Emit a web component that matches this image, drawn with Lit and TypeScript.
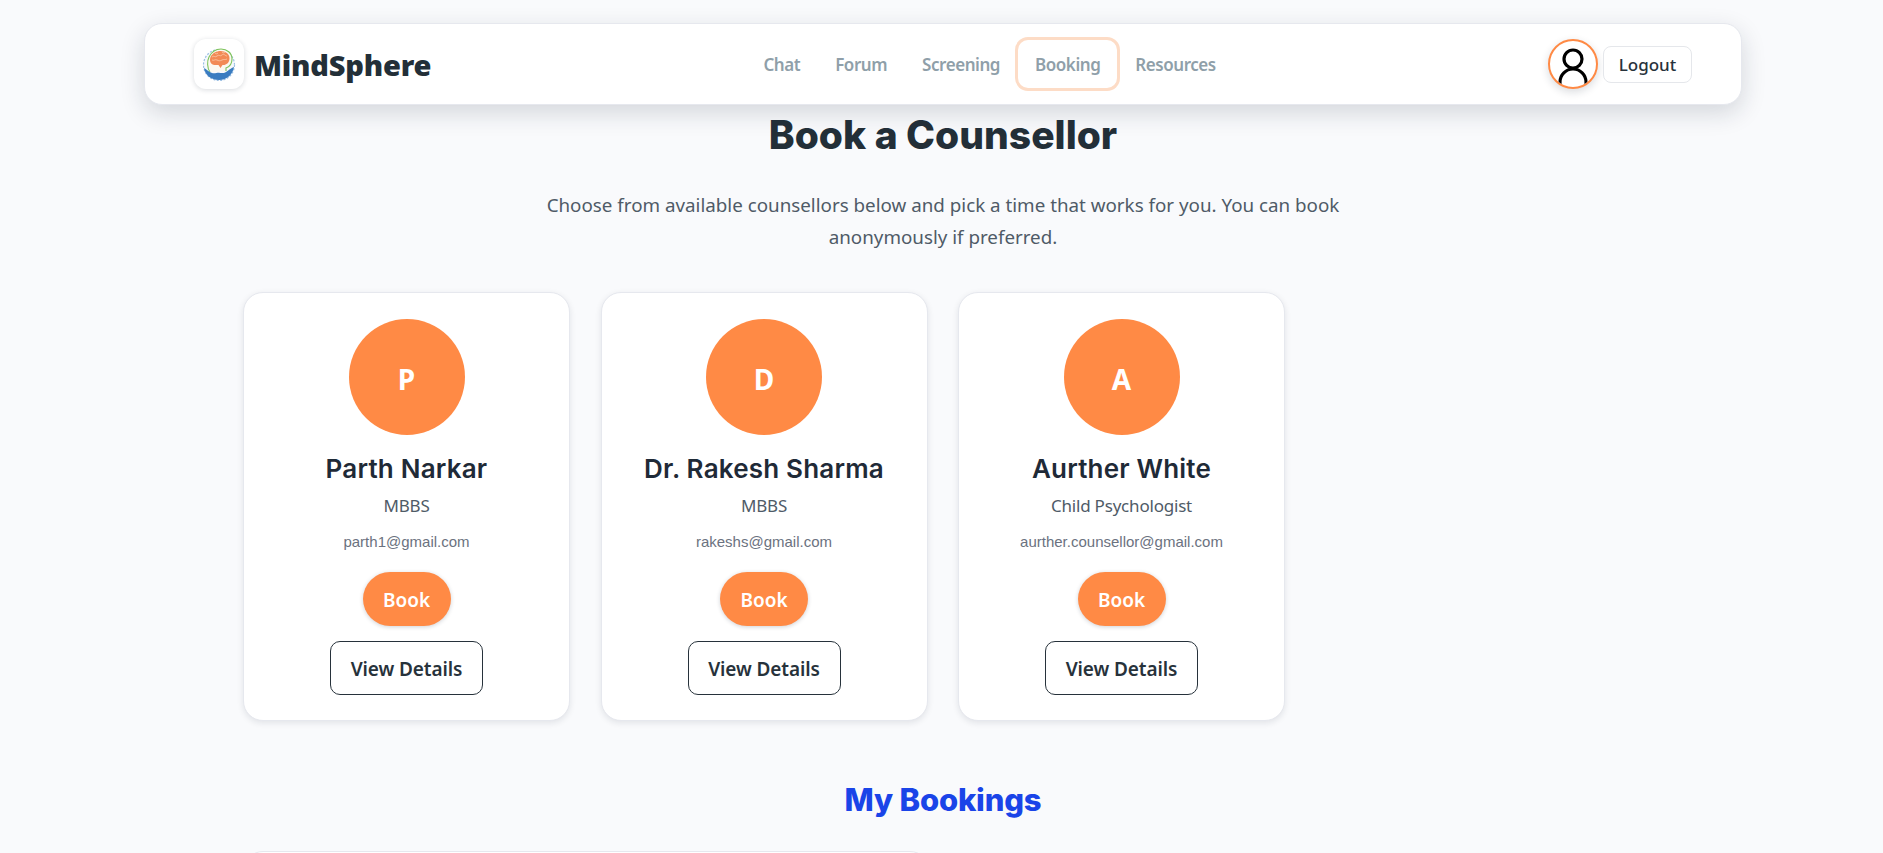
import { LitElement, html, css, svg } from "lit";
import { customElement } from "lit/decorators.js";

const counsellors = [
  { i: "P", name: "Parth Narkar", role: "MBBS", email: "parth1@gmail.com" },
  { i: "D", name: "Dr. Rakesh Sharma", role: "MBBS", email: "rakeshs@gmail.com" },
  { i: "A", name: "Aurther White", role: "Child Psychologist", email: "aurther.counsellor@gmail.com" },
];
const links = ["Chat", "Forum", "Screening", "Booking", "Resources"];

const logo = svg`<svg class="logo" viewBox="0 0 34 34" aria-hidden="true">
  <circle cx="17" cy="18" r="15.5" fill="#f6f9fc" stroke="#9cc0e4" stroke-width="1.2" stroke-dasharray="2 1.5"/>
  <path d="M8 25C5 21 5 14 7 10c3-6 8-8 12-8 6 0 11 4 11 10 0 5-3 8-6 9v3" fill="#fbf8f0" stroke="#7cc35a" stroke-width="1.1"/>
  <path d="M8.500 10c2-4 6-6 10-6 5 0 9 3 9 7 0 4-2 6-5 7h-2l-2 3-2-3h-4C9 18 7 14 8.500 10z" fill="#f28a55"/>
  <path d="M10 10c2-2 3 1 5-1s3 1 5-1 3 1 5 1M10 13c2 1 3-1 5 0s3 1 5 0 3 0 5-1M13 6c1 1 2 1 3 0M20 5c1 1 2 1 3 0" fill="none" stroke="#fbd2b8" stroke-width=".7"/>
  <path d="M2 21c2 1 5 4 8 5 3 1 6-1 8 0h4c3-1 5-4 10-6-1 7-7 13-15 13C9 33 3 28 2 21z" fill="#3a7cc0"/>
</svg>`;

@customElement("app-root")
export class AppRoot extends LitElement {
  static styles = css`
    :host { display: block; height: 853px; overflow: hidden; background: #f9fafc; font-family: "Noto Sans", "Open Sans", sans-serif; color: #1f2a37; }
    .page { width: 1886px; }
    .nav { width: 1598px; height: 82px; box-sizing: border-box; margin: 23px auto 0; padding: 0 49px; display: flex; align-items: center; justify-content: space-between; background: #fff; border: 1px solid #e6e8ee; border-radius: 18px; box-shadow: 0 8px 24px rgba(20, 30, 50, 0.16); position: relative; z-index: 2; }
    .brand { display: flex; align-items: center; gap: 10px; }
    .logo-box { width: 50px; height: 50px; border-radius: 12px; background: #fff; box-shadow: 0 1px 5px rgba(20, 30, 50, 0.16); display: flex; align-items: center; justify-content: center; }
    .logo { width: 34px; height: 34px; }
    .brand-name { font: 900 29px "Noto Sans", sans-serif; color: #232f38; letter-spacing: -0.2px; }
    .links { display: flex; gap: 1px; }
    .link { padding: 0 17px; height: 48px; display: flex; align-items: center; font-size: 17px; font-weight: 600; color: #8f9fa9; letter-spacing: -0.45px; border-radius: 10px; }
    .link.active { box-shadow: 0 0 0 3px #fddcc6; }
    .user { display: flex; align-items: center; gap: 5px; }
    .avatar { width: 50px; height: 50px; box-sizing: border-box; border-radius: 50%; border: 2px solid #ff8a45; box-shadow: 0 3px 8px rgba(20, 30, 50, 0.16); overflow: hidden; background: #fff; }
    .avatar svg { display: block; width: 46px; height: 46px; }
    .logout { width: 89px; height: 37px; box-sizing: border-box; border: 1px solid #e5e7eb; border-radius: 8px; display: flex; align-items: center; justify-content: center; font-size: 17px; font-weight: 500; color: #27323b; background: #fff; }
    h1 { margin: 0; padding-top: 8px; text-align: center; font: 800 39px/44px Inter, sans-serif; color: #232f38; letter-spacing: 0; }
    .sub { width: 860px; margin: 32px auto 0; text-align: center; font-size: 18.8px; line-height: 32px; color: #4f5b67; }
    .grid { width: 1400px; margin: 39px auto 0; display: grid; grid-template-columns: repeat(auto-fill, 327px); gap: 30.5px; }
    .card { box-sizing: border-box; height: 429px; padding: 26px 0 0; display: flex; flex-direction: column; align-items: center; background: #fff; border: 1px solid #e6e8ee; border-radius: 20px; box-shadow: 0 2px 6px rgba(20, 30, 50, 0.1); }
    .circle { width: 116px; height: 116px; box-sizing: border-box; padding-top: 3px; border-radius: 50%; background: #ff8a45; display: flex; align-items: center; justify-content: center; color: #fff; font-size: 28px; font-weight: 700; }
    .name { margin-top: 16px; font: 600 26px/36px Inter, sans-serif; color: #1f2a37; letter-spacing: 0.2px; }
    .role { margin-top: 7px; font-size: 17px; line-height: 24px; color: #4f5b67; letter-spacing: -0.2px; }
    .email { margin-top: 12px; font: 15px/24px "Liberation Sans", sans-serif; color: #6b7280; }
    .book { margin-top: 18px; width: 88px; height: 54px; box-sizing: border-box; padding-top: 2px; border-radius: 27px; background: #ff8a45; color: #fff; font-size: 19px; font-weight: 600; display: flex; align-items: center; justify-content: center; box-shadow: 0 1px 4px rgba(20, 30, 50, 0.2); }
    .details { margin-top: 15px; width: 153px; height: 54px; box-sizing: border-box; padding-top: 2px; border: 1px solid #27323b; border-radius: 10px; color: #27323b; font-size: 19px; font-weight: 600; letter-spacing: -0.1px; display: flex; align-items: center; justify-content: center; }
    h2 { margin: 57px 0 0; text-align: center; font: 800 31px/44px Inter, sans-serif; color: #1a44e8; letter-spacing: -0.2px; }
    .peek { width: 685px; height: 60px; margin: 29px 0 0 243px; background: #fff; border: 1px solid #e6e8ee; border-radius: 20px; }
  `;

  render() {
    return html`
      <div class="page">
      <nav class="nav">
        <div class="brand">
          <div class="logo-box">${logo}</div>
          <span class="brand-name">MindSphere</span>
        </div>
        <div class="links">
          ${links.map((l) => html`<span class="link ${l === "Booking" ? "active" : ""}">${l}</span>`)}
        </div>
        <div class="user">
          <div class="avatar">
            <svg viewBox="0 0 46 46" fill="none" stroke="#000" stroke-width="3.2" aria-hidden="true">
              <circle cx="23" cy="18" r="9"/>
              <path d="M10 44v-3a13 13 0 0 1 26 0v3"/>
            </svg>
          </div>
          <div class="logout">Logout</div>
        </div>
      </nav>
      <h1>Book a Counsellor</h1>
      <p class="sub">Choose from available counsellors below and pick a time that works for you. You can book anonymously if preferred.</p>
      <div class="grid">
        ${counsellors.map((c) => html`
          <div class="card">
            <div class="circle">${c.i}</div>
            <div class="name">${c.name}</div>
            <div class="role">${c.role}</div>
            <div class="email">${c.email}</div>
            <div class="book">Book</div>
            <div class="details">View Details</div>
          </div>`)}
      </div>
      <h2>My Bookings</h2>
      <div class="peek"></div>
      </div>
    `;
  }
}
